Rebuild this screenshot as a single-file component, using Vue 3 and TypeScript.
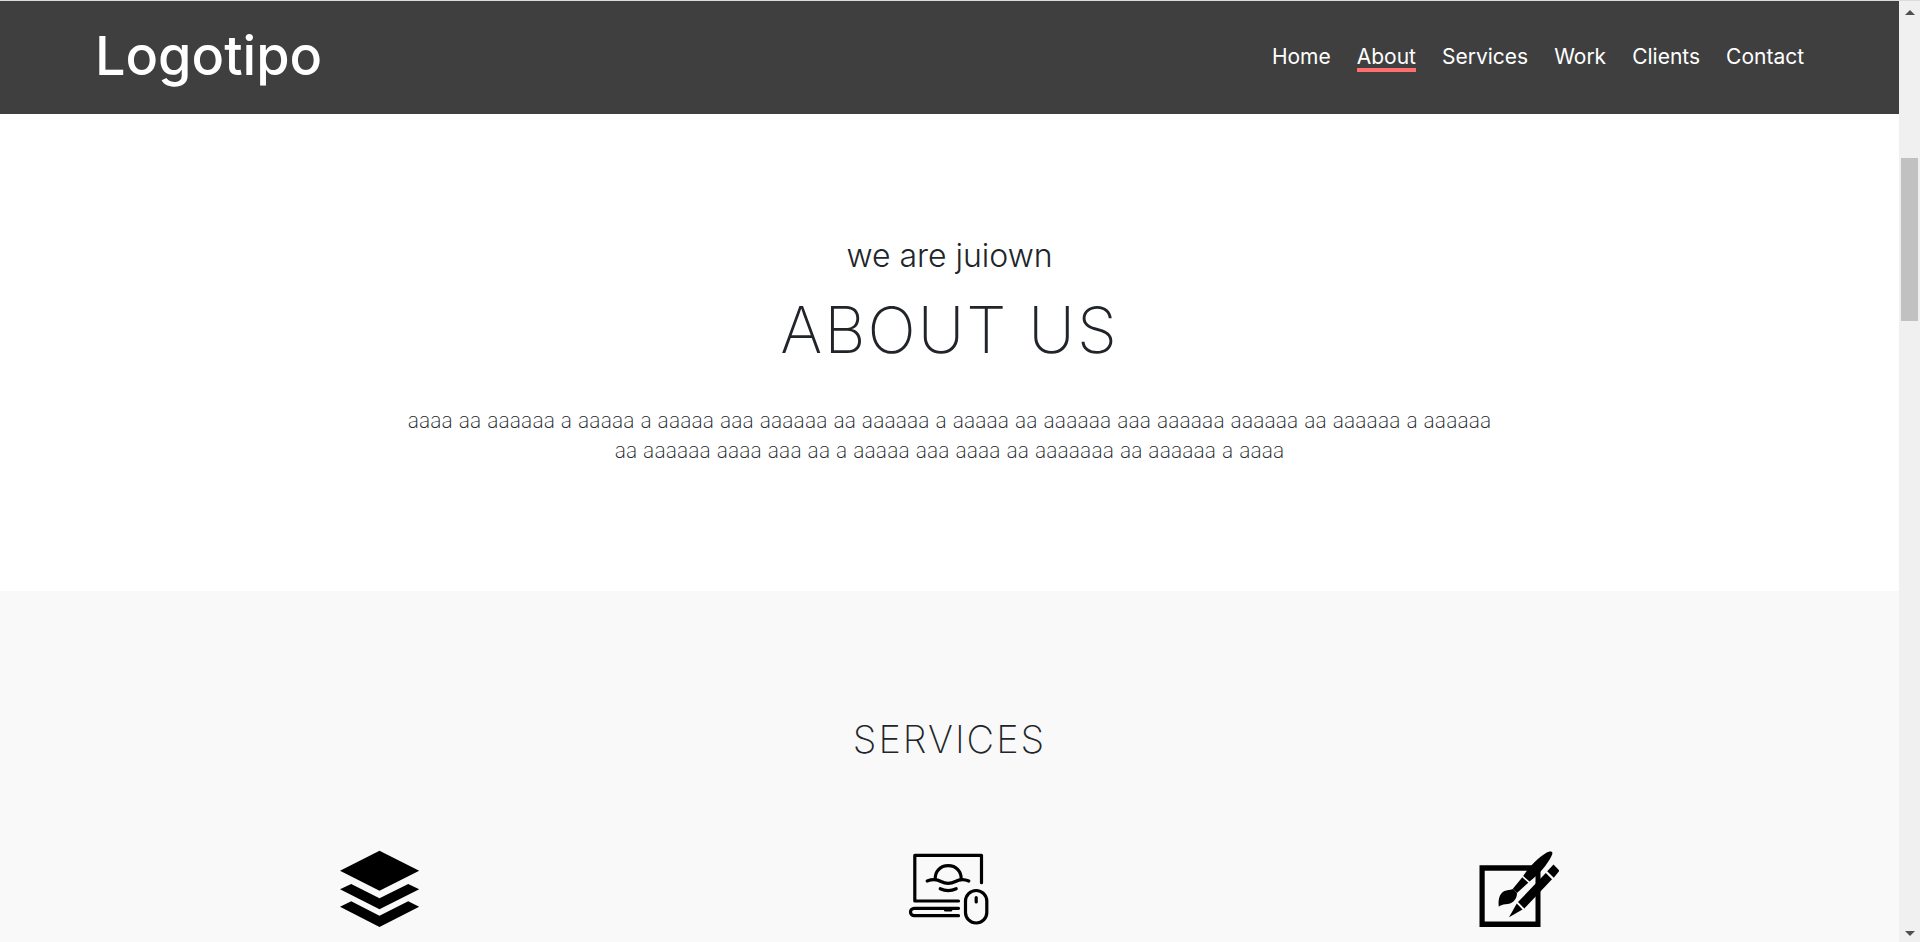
<script setup lang="ts">
interface NavLink {
  label: string
  href: string
}

const links: NavLink[] = [
  { label: 'Home', href: '#home' },
  { label: 'About', href: '#about' },
  { label: 'Services', href: '#services' },
  { label: 'Work', href: '#work' },
  { label: 'Clients', href: '#clients' },
  { label: 'Contact', href: '#contact' },
]
const active = 'About'
</script>

<template>
  <div class="window">
    <div class="page">
      <header class="header">
        <a class="logo" href="#home">Logotipo</a>
        <nav class="nav" aria-label="Main">
          <a
            v-for="link in links"
            :key="link.label"
            :href="link.href"
            :class="['nav-link', { active: link.label === active }]"
          >{{ link.label }}</a>
        </nav>
      </header>

      <section id="about" class="about">
        <p class="kicker">we are juiown</p>
        <h1 class="title">ABOUT US</h1>
        <p class="copy">
          aaaa aa aaaaaa a aaaaa a aaaaa aaa aaaaaa aa aaaaaa a aaaaa aa aaaaaa aaa aaaaaa aaaaaa aa aaaaaa a aaaaaa
          aa aaaaaa aaaa aaa aa a aaaaa aaa aaaa aa aaaaaaa aa aaaaaa a aaaa
        </p>
      </section>

      <section id="services" class="services">
        <h2 class="subtitle">SERVICES</h2>
        <div class="cards">
          <div class="card">
            <svg class="icon" viewBox="0 0 80 80" aria-hidden="true">
              <path d="M39.5 1.7 79.2 21.7 39.5 41.7 0 21.7z" />
              <path d="M0 40.3 11.2 35 39.5 49.3 68.2 35 79.2 40.3 39.5 60.3z" />
              <path d="M0 57.7 11.2 52.3 39.5 66.7 68.2 52.3 79.2 57.7 39.5 78z" />
            </svg>
          </div>
          <div class="card">
            <svg class="icon line" viewBox="0 0 80 80" aria-hidden="true">
              <path d="M49.5 52H5.8V6.3H72.5V33.7" />
              <path d="M26.2 30.5C25.8 22.5 31.2 16.6 39.2 16.6S52.6 22.5 52.2 30.5" />
              <path d="M18.2 32C23.5 30 28.5 30.5 32 32.5C37 35.2 41.4 35.2 46.4 32.5C50 30.5 55 30 59.8 32" />
              <path d="M31.2 39.7Q39.2 43.5 47.2 39.7" />
              <path d="M49.5 59.3H5.2A3.7 3.7 0 0 0 5.2 66.7H49.5" />
              <path d="M36.5 61H41.8" />
              <rect x="56.5" y="41.5" width="21.3" height="32.5" rx="10.6" />
              <path d="M67.2 48.7V53" />
            </svg>
          </div>
          <div class="card">
            <svg class="icon" viewBox="0 0 80 80" aria-hidden="true">
              <path fill-rule="evenodd" d="M.5 16.3H61.5V78H.5zM5.7 21.7V72.5H56.5V21.700z" />
              <path d="M72 2.600C74 3 73.500 5 72.500 7C68 16 60 25.500 50.500 32.500L44.200 27C50 18 60 8 67 4C69 2.800 70.800 2.300 72 2.600z" />
              <path d="M43.300 28.300 49.300 33.700 38 44 33.700 40z" />
              <path d="M33.700 40 38 44C38 51 33 55 26.500 55.300C23.500 55.600 21 56.500 19.800 57.800C19 50 20.500 44.500 25.500 42C28 40.800 31 41.500 33.700 40z" />
              <path d="M74.500 15.500 80.500 21.700 74.800 28.800 68.200 22.300z" />
              <path d="M66.800 24 73 30.300 45.300 59.500 39 53z" />
              <path d="M37.800 54.500 43.500 60.500 30 68.200z" />
            </svg>
          </div>
        </div>
      </section>
    </div>

    <div class="scrollbar" aria-hidden="true">
      <svg class="arrow" viewBox="0 0 10 5"><path d="M5 0 10 5H0z" /></svg>
      <div class="track"><div class="thumb"></div></div>
      <svg class="arrow" viewBox="0 0 10 5"><path d="M0 0H10L5 5z" /></svg>
    </div>
  </div>
</template>

<style>
body {
  margin: 0;
}
</style>

<style scoped>
.window {
  display: flex;
  height: 100vh;
  box-sizing: border-box;
  border-top: 1px solid #dadce0;
  overflow: hidden;
  background: #fff;
  color: #212529;
  font-family: Inter, "Liberation Sans", sans-serif;
}
.page {
  flex: 1;
  min-width: 0;
  display: flex;
  flex-direction: column;
  overflow: hidden;
}
.header {
  flex: none;
  display: flex;
  align-items: center;
  justify-content: space-between;
  box-sizing: border-box;
  height: 113px;
  padding: 0 5%;
  background: #3f3f3f;
}
.logo {
  padding-bottom: 4px;
  color: #fff;
  font-size: 54px;
  font-weight: 500;
  line-height: 64px;
  text-decoration: none;
}
.nav {
  display: flex;
  gap: 26px;
}
.nav-link {
  padding-top: 2px;
  border-bottom: 4px solid transparent;
  color: #fff;
  font-size: 21px;
  font-weight: 400;
  line-height: 22px;
  text-decoration: none;
}
.nav-link.active {
  border-bottom-color: #ff6f6f;
}
.about {
  flex: none;
  padding: 120px 5% 125px;
  text-align: center;
}
.kicker {
  margin: 0;
  font-size: 32px;
  font-weight: 300;
  line-height: 44px;
}
.title {
  margin: 16px 0 40px;
  font-size: 64px;
  font-weight: 200;
  line-height: 72px;
  letter-spacing: 2px;
}
.copy {
  max-width: 1100px;
  margin: 0 auto;
  font-size: 21px;
  font-weight: 200;
  line-height: 30px;
}
.services {
  flex: 1 0 auto;
  padding: 120px 5% 0;
  background: #f9f9f9;
}
.subtitle {
  margin: 0 0 82px;
  font-size: 38px;
  font-weight: 200;
  line-height: 56px;
  letter-spacing: 2px;
  text-align: center;
}
.cards {
  display: grid;
  grid-template-columns: repeat(3, 1fr);
}
.card {
  display: flex;
  justify-content: center;
}
.icon {
  width: 80px;
  height: 80px;
  fill: #000;
}
.icon.line {
  fill: none;
  stroke: #000;
  stroke-width: 3.2;
  stroke-linecap: round;
  stroke-linejoin: round;
}
.scrollbar {
  flex: none;
  display: flex;
  flex-direction: column;
  align-items: center;
  box-sizing: border-box;
  width: 21px;
  padding: 9px 2px 6px;
  background: #f0f0f0;
}
.arrow {
  flex: none;
  width: 10px;
  height: 5px;
  fill: #505050;
}
.track {
  flex: 1;
  width: 100%;
  padding-top: 143px;
}
.thumb {
  height: 163px;
  background: #c1c1c1;
}
</style>
